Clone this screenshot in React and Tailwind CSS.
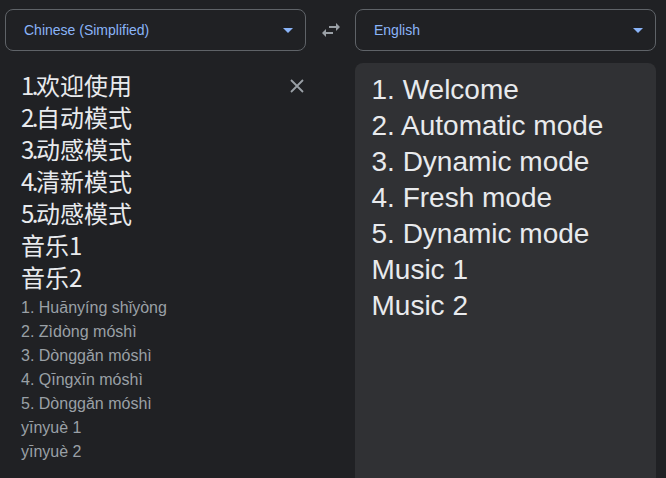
import React from "react";

const Caret = () => (
  <svg width="10" height="5" viewBox="0 0 10 5" className="shrink-0">
    <path d="M0 0 L10 0 L5 5 Z" fill="#8ab4f8" />
  </svg>
);

function Select({ label }) {
  return (
    <div className="flex-1 h-[42px] rounded-[8px] border border-[#5f6368] flex items-center pl-[18px] pr-[12px]">
      <span className="flex-1 text-[14px] text-[#8ab4f8]">{label}</span>
      <Caret />
    </div>
  );
}

const zh = [
  ["1.", "欢迎使用"],
  ["2.", "自动模式"],
  ["3.", "动感模式"],
  ["4.", "清新模式"],
  ["5.", "动感模式"],
  ["", "音乐1"],
  ["", "音乐2"],
];
const py = [
  "1. Huānyíng shǐyòng",
  "2. Zìdòng móshì",
  "3. Dònggǎn móshì",
  "4. Qīngxīn móshì",
  "5. Dònggǎn móshì",
  "yīnyuè 1",
  "yīnyuè 2",
];
const en = [
  "1. Welcome",
  "2. Automatic mode",
  "3. Dynamic mode",
  "4. Fresh mode",
  "5. Dynamic mode",
  "Music 1",
  "Music 2",
];

export default function App() {
  return (
    <div
      className="w-[666px] h-[478px] bg-[#202124] overflow-hidden flex flex-col"
      style={{ fontFamily: '"Liberation Sans", Arial, "Noto Sans CJK SC", sans-serif' }}
    >
      <div className="flex items-center pt-[9px] pl-[5px] pr-[10px]">
        <Select label="Chinese (Simplified)" />
        <div className="w-[49px] flex justify-center">
          <svg width="24" height="24" viewBox="0 0 24 24">
            <path
              d="M6.99 11L3 15l3.99 4v-3H14v-2H6.99v-3zM21 9l-3.99-4v3H10v2h7.01v3L21 9z"
              fill="#9aa0a6"
            />
          </svg>
        </div>
        <Select label="English" />
      </div>
      <div className="flex flex-1 pt-[12px] pl-[5px] pr-[10px]">
        <div className="flex-1 relative pl-[16px] pt-[6px]">
          <button className="absolute right-0 top-[14px] w-[18px] h-[18px] flex items-center justify-center">
            <svg width="14" height="14" viewBox="0 0 14 14">
              <path d="M1 1 L13 13 M13 1 L1 13" stroke="#9aa0a6" strokeWidth="1.8" />
            </svg>
          </button>
          {zh.map(([n, t]) => (
            <div
              key={t + n}
              className="text-[24px] leading-[32px] text-[#e8eaed]"
              style={{ fontFamily: '"Noto Sans CJK SC", "Liberation Sans", sans-serif' }}
            >
              {n && <span className="tracking-[-2.5px]">{n}</span>}
              {t}
            </div>
          ))}
          <div className="pt-[3px]">
            {py.map((t) => (
              <div key={t} className="text-[16px] leading-[24px] text-[#9aa0a6]">
                {t}
              </div>
            ))}
          </div>
        </div>
        <div className="w-[49px]" />
        <div className="flex-1 bg-[#303134] rounded-t-[8px] pl-[17px] pt-[9px]">
          {en.map((t) => (
            <div key={t} className="text-[28px] leading-[36px] text-[#e8eaed]">
              {t}
            </div>
          ))}
        </div>
      </div>
    </div>
  );
}
